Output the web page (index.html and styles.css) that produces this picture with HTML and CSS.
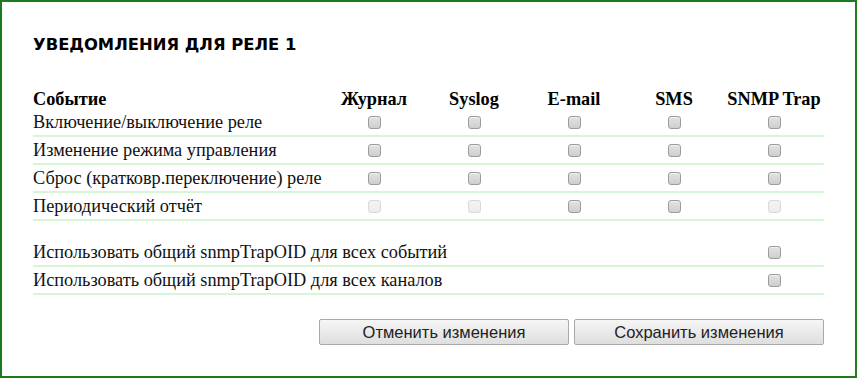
FILE: index.html
```html
<!DOCTYPE html>
<html lang="ru">
<head>
<meta charset="utf-8">
<title>Уведомления для реле 1</title>
<link rel="stylesheet" href="styles.css">
</head>
<body>
<div class="frame">
  <h1 class="title">УВЕДОМЛЕНИЯ ДЛЯ РЕЛЕ 1</h1>
  <table class="grid">
    <colgroup>
      <col class="c-name"><col class="c-chk"><col class="c-chk"><col class="c-chk"><col class="c-chk"><col class="c-chk">
    </colgroup>
    <thead>
      <tr class="head">
        <th class="name">Событие</th><th>Журнал</th><th>Syslog</th><th>E-mail</th><th>SMS</th><th>SNMP Trap</th>
      </tr>
    </thead>
    <tbody>
      <tr class="row">
        <td class="name">Включение/выключение реле</td>
        <td><input type="checkbox" class="cb"></td><td><input type="checkbox" class="cb"></td><td><input type="checkbox" class="cb"></td><td><input type="checkbox" class="cb"></td><td><input type="checkbox" class="cb"></td>
      </tr>
      <tr class="row">
        <td class="name">Изменение режима управления</td>
        <td><input type="checkbox" class="cb"></td><td><input type="checkbox" class="cb"></td><td><input type="checkbox" class="cb"></td><td><input type="checkbox" class="cb"></td><td><input type="checkbox" class="cb"></td>
      </tr>
      <tr class="row">
        <td class="name">Сброс (кратковр.переключение) реле</td>
        <td><input type="checkbox" class="cb"></td><td><input type="checkbox" class="cb"></td><td><input type="checkbox" class="cb"></td><td><input type="checkbox" class="cb"></td><td><input type="checkbox" class="cb"></td>
      </tr>
      <tr class="row">
        <td class="name">Периодический отчёт</td>
        <td><input type="checkbox" class="cb" disabled></td><td><input type="checkbox" class="cb" disabled></td><td><input type="checkbox" class="cb"></td><td><input type="checkbox" class="cb"></td><td><input type="checkbox" class="cb" disabled></td>
      </tr>
      <tr class="spacer"><td colspan="6"></td></tr>
      <tr class="row">
        <td class="name" colspan="5">Использовать общий snmpTrapOID для всех событий</td>
        <td><input type="checkbox" class="cb"></td>
      </tr>
      <tr class="row">
        <td class="name" colspan="5">Использовать общий snmpTrapOID для всех каналов</td>
        <td><input type="checkbox" class="cb"></td>
      </tr>
    </tbody>
  </table>
  <div class="actions">
    <button class="btn" type="button">Отменить изменения</button>
    <button class="btn" type="button">Сохранить изменения</button>
  </div>
</div>
</body>
</html>
```
FILE: styles.css
```css
html, body {
  margin: 0;
  padding: 0;
  background: #ffffff;
}

.frame {
  width: 857px;
  height: 378px;
  box-sizing: border-box;
  border: 2px solid #1e7a1e;
  padding: 0 31px 0 31px;
  font-family: "Liberation Serif", "Times New Roman", serif;
  color: #111;
}

.title {
  margin: 0;
  padding-top: 33px;
  height: 20px;
  line-height: 20px;
  font-family: "DejaVu Sans", Verdana, sans-serif;
  font-size: 16.4px;
  font-weight: bold;
  color: #000;
}

.grid {
  margin-top: 34px;
  width: 791px;
  table-layout: fixed;
  border-collapse: collapse;
  font-size: 18.3px;
}

.c-name { width: 291px; }
.c-chk { width: 100px; }

.grid th, .grid td {
  padding: 0;
  text-align: center;
  vertical-align: middle;
  line-height: 20px;
}

.grid .name {
  text-align: left;
}

.head th {
  height: 20px;
  font-weight: bold;
  color: #000;
}

.row td {
  height: 26px;
  border-bottom: 2px solid #d6f6d6;
}

.spacer td {
  height: 18px;
}

.cb {
  appearance: none;
  -webkit-appearance: none;
  display: block;
  margin: 0 auto;
  width: 13px;
  height: 13px;
  box-sizing: border-box;
  border: 1px solid #9c9c9c;
  border-radius: 3px;
  background: linear-gradient(#e2e2e2, #cfcfcf);
  box-shadow: inset 0 1px 0 #f0f0f0;
}

.cb:disabled {
  border-color: #d9d9d9;
  background: linear-gradient(#f3f3f3, #ececec);
  box-shadow: none;
}

.actions {
  display: flex;
  justify-content: flex-end;
  gap: 5px;
  margin-top: 24px;
  width: 791px;
}

.btn {
  width: 250px;
  height: 26px;
  padding: 0;
  border: 1px solid #a9a9a9;
  border-radius: 2px;
  background: linear-gradient(#f6f6f6, #dedede);
  font-family: "Liberation Sans", Arial, sans-serif;
  font-size: 16.5px;
  color: #222;
}
```
